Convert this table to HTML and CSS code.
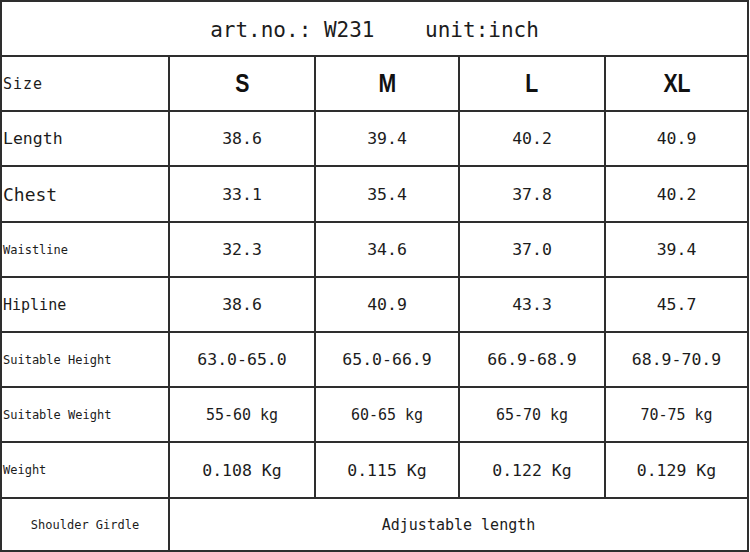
FILE: index.html
```html
<!DOCTYPE html>
<html>
<head>
<meta charset="utf-8">
<link rel="stylesheet" href="styles.css">
</head>
<body>
<div class="table">
  <div class="cell title">art.no.: W231    unit:inch</div>

  <div class="cell label l-size">Size</div>
  <div class="cell size"><span>S</span></div>
  <div class="cell size"><span>M</span></div>
  <div class="cell size"><span>L</span></div>
  <div class="cell size"><span>XL</span></div>

  <div class="cell label l-length">Length</div>
  <div class="cell num">38.6</div>
  <div class="cell num">39.4</div>
  <div class="cell num">40.2</div>
  <div class="cell num">40.9</div>

  <div class="cell label l-chest">Chest</div>
  <div class="cell num">33.1</div>
  <div class="cell num">35.4</div>
  <div class="cell num">37.8</div>
  <div class="cell num">40.2</div>

  <div class="cell label l-small">Waistline</div>
  <div class="cell num">32.3</div>
  <div class="cell num">34.6</div>
  <div class="cell num">37.0</div>
  <div class="cell num">39.4</div>

  <div class="cell label l-hip">Hipline</div>
  <div class="cell num">38.6</div>
  <div class="cell num">40.9</div>
  <div class="cell num">43.3</div>
  <div class="cell num">45.7</div>

  <div class="cell label l-small">Suitable Height</div>
  <div class="cell num">63.0-65.0</div>
  <div class="cell num">65.0-66.9</div>
  <div class="cell num">66.9-68.9</div>
  <div class="cell num">68.9-70.9</div>

  <div class="cell label l-small">Suitable Weight</div>
  <div class="cell num sm">55-60 kg</div>
  <div class="cell num sm">60-65 kg</div>
  <div class="cell num sm">65-70 kg</div>
  <div class="cell num sm">70-75 kg</div>

  <div class="cell label l-small">Weight</div>
  <div class="cell num">0.108 Kg</div>
  <div class="cell num">0.115 Kg</div>
  <div class="cell num">0.122 Kg</div>
  <div class="cell num">0.129 Kg</div>

  <div class="cell label l-small l-center">Shoulder Girdle</div>
  <div class="cell num sm wide">Adjustable length</div>
</div>
</body>
</html>
```
FILE: styles.css
```css
html, body {
  margin: 0;
  padding: 0;
  background: #ffffff;
}

.table {
  display: grid;
  grid-template-columns: 166px 144px 142px 144px 141px;
  grid-template-rows: 53px 53px 53px 54px 53px 53px 53px 53px 54px 51px;
  gap: 2px;
  padding: 2px;
  background: #2e2e2e;
  width: max-content;
  font-family: "DejaVu Sans Mono", "Liberation Mono", monospace;
  color: #1c1c1c;
}

.cell {
  background: #ffffff;
  display: flex;
  align-items: center;
  justify-content: center;
  white-space: pre;
}

.title {
  grid-column: 1 / span 5;
  font-size: 21px;
  padding-top: 3px;
}

.label {
  justify-content: flex-start;
  padding-left: 1px;
}

.l-size {
  font-size: 15px;
  letter-spacing: 1px;
}

.l-length {
  font-size: 16.5px;
}

.l-chest {
  font-size: 18px;
}

.l-hip {
  font-size: 15px;
}

.l-small {
  font-size: 12px;
}

.l-center {
  justify-content: center;
  padding-left: 0;
}

.size span {
  display: inline-block;
  font-family: "Liberation Sans", Arial, sans-serif;
  font-weight: bold;
  font-size: 25px;
  color: #111111;
  transform: scaleX(0.85);
}

.num {
  font-size: 16.5px;
}

.num.sm {
  font-size: 15px;
}

.wide {
  grid-column: 2 / span 4;
}
```
